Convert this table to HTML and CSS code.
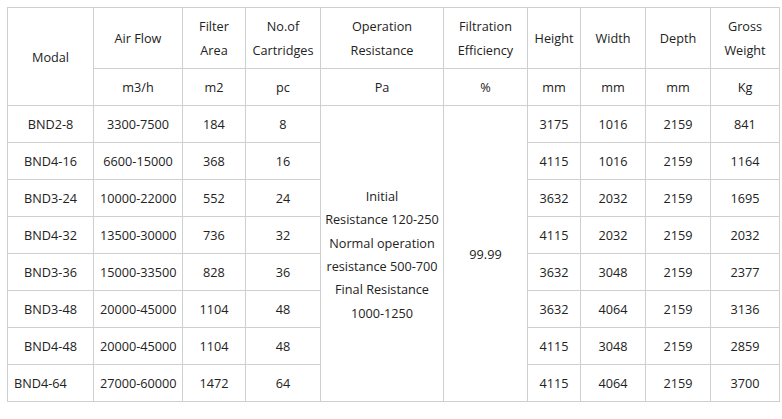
FILE: index.html
```html
<!DOCTYPE html>
<html>
<head>
<meta charset="utf-8">
<link rel="stylesheet" href="styles.css">
</head>
<body>
<table class="spec">
  <colgroup>
    <col class="c1"><col class="c2"><col class="c3"><col class="c4"><col class="c5">
    <col class="c6"><col class="c7"><col class="c8"><col class="c9"><col class="c10">
  </colgroup>
  <tr class="h1">
    <td rowspan="2">Modal</td>
    <td>Air Flow</td>
    <td>Filter<br>Area</td>
    <td>No.of<br>Cartridges</td>
    <td>Operation<br>Resistance</td>
    <td>Filtration<br>Efficiency</td>
    <td>Height</td>
    <td>Width</td>
    <td>Depth</td>
    <td>Gross<br>Weight</td>
  </tr>
  <tr class="row">
    <td>m3/h</td><td>m2</td><td>pc</td><td>Pa</td><td>%</td><td>mm</td><td>mm</td><td>mm</td><td>Kg</td>
  </tr>
  <tr class="row">
    <td>BND2-8</td><td>3300-7500</td><td>184</td><td>8</td>
    <td rowspan="8" class="multi">Initial<br>Resistance 120-250<br>Normal operation<br>resistance 500-700<br>Final Resistance<br>1000-1250</td>
    <td rowspan="8">99.99</td>
    <td>3175</td><td>1016</td><td>2159</td><td>841</td>
  </tr>
  <tr class="row">
    <td>BND4-16</td><td>6600-15000</td><td>368</td><td>16</td>
    <td>4115</td><td>1016</td><td>2159</td><td>1164</td>
  </tr>
  <tr class="row">
    <td>BND3-24</td><td>10000-22000</td><td>552</td><td>24</td>
    <td>3632</td><td>2032</td><td>2159</td><td>1695</td>
  </tr>
  <tr class="row">
    <td>BND4-32</td><td>13500-30000</td><td>736</td><td>32</td>
    <td>4115</td><td>2032</td><td>2159</td><td>2032</td>
  </tr>
  <tr class="row">
    <td>BND3-36</td><td>15000-33500</td><td>828</td><td>36</td>
    <td>3632</td><td>3048</td><td>2159</td><td>2377</td>
  </tr>
  <tr class="row">
    <td>BND3-48</td><td>20000-45000</td><td>1104</td><td>48</td>
    <td>3632</td><td>4064</td><td>2159</td><td>3136</td>
  </tr>
  <tr class="row">
    <td>BND4-48</td><td>20000-45000</td><td>1104</td><td>48</td>
    <td>4115</td><td>3048</td><td>2159</td><td>2859</td>
  </tr>
  <tr class="row">
    <td class="left">BND4-64</td><td>27000-60000</td><td>1472</td><td>64</td>
    <td>4115</td><td>4064</td><td>2159</td><td>3700</td>
  </tr>
</table>
</body>
</html>
```

FILE: styles.css
```css
html, body {
  margin: 0;
  padding: 0;
  background: #ffffff;
}
body {
  padding: 7px 0 0 7px;
  font-family: "Open Sans", "Noto Sans", sans-serif;
  font-size: 12.7px;
  color: #222222;
}
.spec {
  border-collapse: collapse;
  table-layout: fixed;
  width: 772px;
}
.spec td {
  border: 1px solid #cfcfcf;
  text-align: center;
  vertical-align: middle;
  padding: 0 6px;
  line-height: 24px;
  white-space: nowrap;
}
.spec td.multi {
  line-height: 23.4px;
  padding: 3px 0 0 0;
}
.spec td.left {
  text-align: left;
}
.h1 { height: 61px; }
.row { height: 37px; }
.c1 { width: 86px; }
.c2 { width: 89px; }
.c3 { width: 63px; }
.c4 { width: 75px; }
.c5 { width: 123px; }
.c6 { width: 84px; }
.c7 { width: 53px; }
.c8 { width: 65px; }
.c9 { width: 65px; }
.c10 { width: 69px; }
```
